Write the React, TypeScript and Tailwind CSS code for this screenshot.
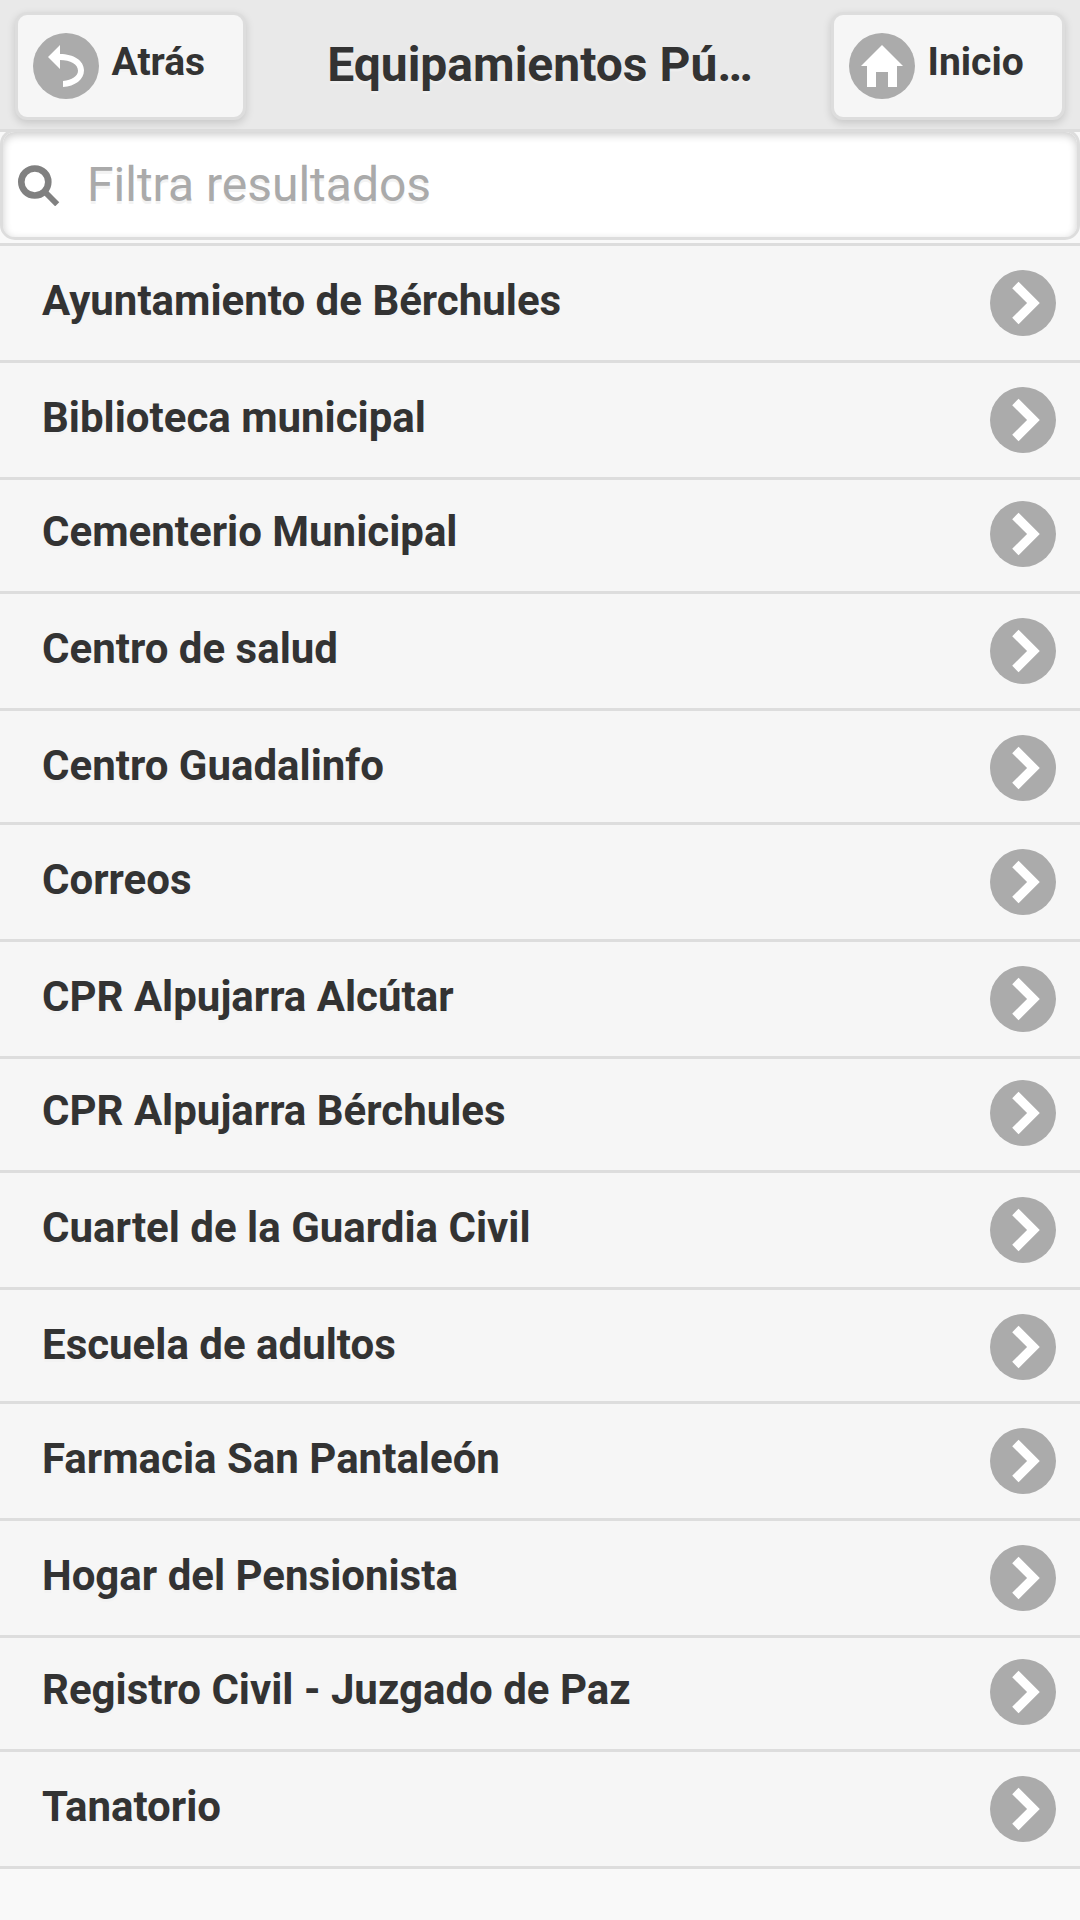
import type { ReactNode } from 'react';

type Row = { label: string; short?: boolean; raised?: boolean };

const rows: Row[] = [
  { label: 'Ayuntamiento de Bérchules' },
  { label: 'Biblioteca municipal' },
  { label: 'Cementerio Municipal', short: true, raised: true },
  { label: 'Centro de salud' },
  { label: 'Centro Guadalinfo', short: true },
  { label: 'Correos' },
  { label: 'CPR Alpujarra Alcútar' },
  { label: 'CPR Alpujarra Bérchules', short: true, raised: true },
  { label: 'Cuartel de la Guardia Civil' },
  { label: 'Escuela de adultos', short: true },
  { label: 'Farmacia San Pantaleón' },
  { label: 'Hogar del Pensionista' },
  { label: 'Registro Civil - Juzgado de Paz', short: true, raised: true },
  { label: 'Tanatorio' },
];

function Disc({ children }: { children: ReactNode }) {
  return (
    <span className="flex size-[66px] shrink-0 items-center justify-center rounded-full bg-[#ababab]">
      <svg viewBox="0 0 14 14" className="size-[42px] overflow-visible fill-white">
        {children}
      </svg>
    </span>
  );
}

function HeaderButton({ icon, label, className }: { icon: ReactNode; label: string; className: string }) {
  return (
    <button
      className={`flex h-[108px] shrink-0 items-start rounded-[12px] border-3 border-[#ddd] bg-[#f6f6f6] pt-[18px] pl-[15px] shadow-[0_3px_9px_rgba(0,0,0,0.15)] ${className}`}
    >
      <Disc>{icon}</Disc>
      <span className="ml-[12.5px] text-[39px] leading-[58px] font-bold [text-shadow:0_3px_0_#f3f3f3]">{label}</span>
    </button>
  );
}

export default function App() {
  return (
    <div className="h-[1920px] w-[1080px] overflow-hidden bg-[#f9f9f9] font-['Roboto',sans-serif] text-[#333]">
      <header className="flex h-[132px] items-start justify-between border-b-3 border-[#ddd] bg-[#e9e9e9] px-[15px] pt-[12px]">
        <HeaderButton
          label="Atrás"
          className="w-[231px]"
          icon={<path d="M5 3V0L1 4l4 4V5c3.500 0 6 1.400 6 3.600 0 1.700-2 3.200-5 3.400v2c4-.3 7-2.400 7-5.600C13 5.200 9.500 3 5 3z" />}
        />
        <h1 className="ml-[3px] w-[432px] truncate pt-[20px] text-center text-[48px] leading-[66px] font-bold [text-shadow:0_3px_0_#eee]">
          Equipamientos Pú…
        </h1>
        <HeaderButton
          label="Inicio"
          className="w-[234px]"
          icon={<path d="M7 0 0 7h2v7h3V9h4v5h3V7h2z" />}
        />
      </header>
      <div className="-mt-[3px] flex h-[111px] items-center rounded-[15px] border-3 border-[#ddd] bg-white pl-[15px] shadow-[inset_0_3px_9px_rgba(0,0,0,0.2)]">
        <svg viewBox="0 0 42 42" className="size-[42px] shrink-0" fill="none" stroke="#808080">
          <circle cx="16.800" cy="18" r="13.500" strokeWidth="6.600" />
          <path d="M26.500 27.500 39.200 40.300" strokeWidth="5.800" />
        </svg>
        <input
          type="text"
          placeholder="Filtra resultados"
          className="ml-[27px] h-[66px] min-w-0 flex-1 text-[48px] outline-none [text-shadow:0_3px_0_#f3f3f3] placeholder:text-[#aaa]"
        />
      </div>
      <ul className="mt-[3px] border-b-3 border-[#ddd]">
        {rows.map(({ label, short, raised }) => (
          <li
            key={label}
            className={`flex items-start justify-between border-t-3 border-[#ddd] bg-[#f6f6f6] pr-[24px] pl-[42px] ${
              short ? 'h-[114px]' : 'h-[117px]'
            } ${raised ? 'pt-[21px]' : 'pt-[24px]'}`}
          >
            <span className="text-[42px] leading-[62px] font-bold [text-shadow:0_3px_0_#f3f3f3]">{label}</span>
            <Disc>
              <path d="M3.404 2.051 5.525-.071 12.596 7l-7.071 7.071-2.121-2.122L8.354 7z" />
            </Disc>
          </li>
        ))}
      </ul>
    </div>
  );
}
